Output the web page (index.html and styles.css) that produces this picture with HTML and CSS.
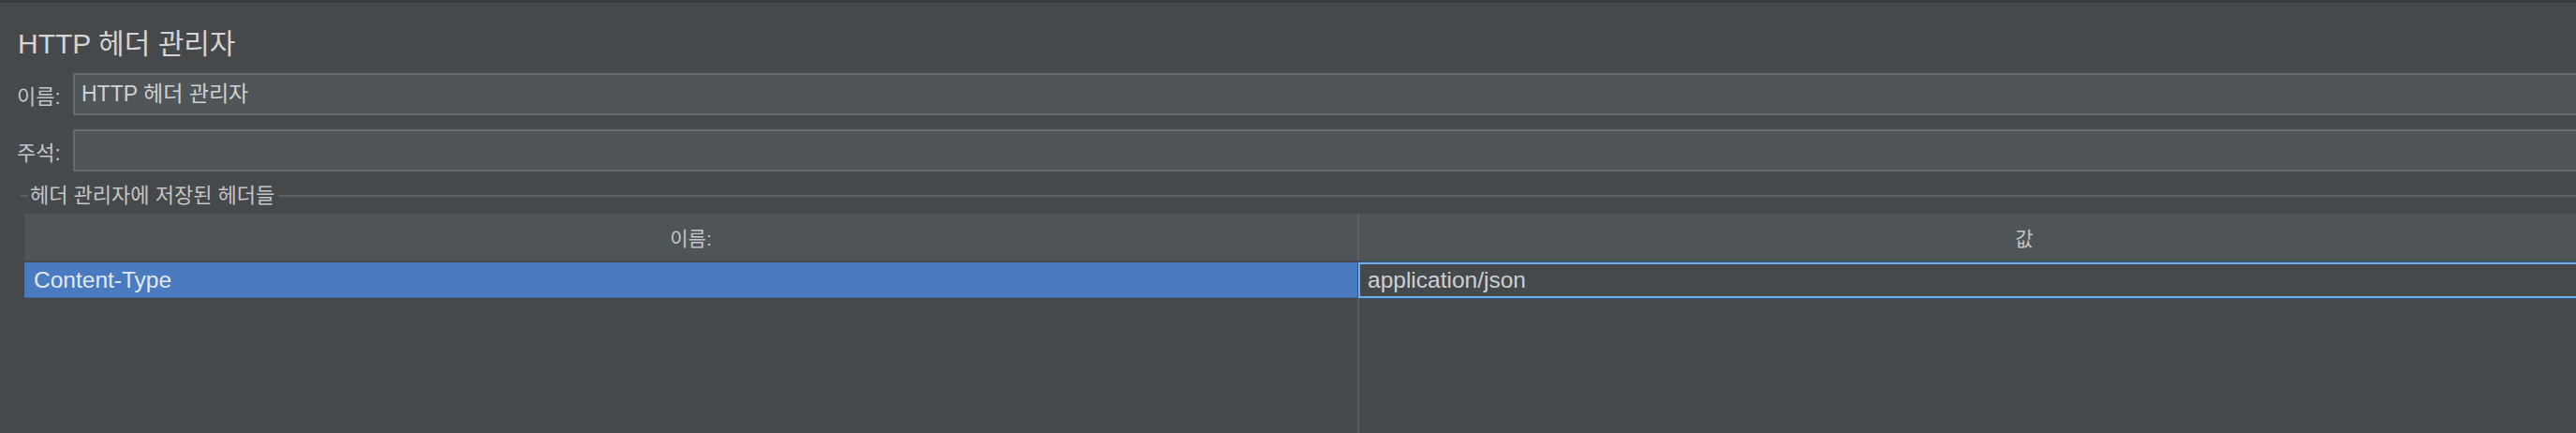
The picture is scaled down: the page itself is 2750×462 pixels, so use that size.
FILE: index.html
```html
<!DOCTYPE html>
<html lang="ko">
<head>
<meta charset="utf-8">
<title>HTTP 헤더 관리자</title>
<link rel="stylesheet" href="styles.css">
</head>
<body>
<div class="topbar"></div>
<main class="panel">
  <h1 class="title">HTTP 헤더 관리자</h1>
  <div class="field-row">
    <label class="label">이름:</label>
    <div class="input">HTTP 헤더 관리자</div>
  </div>
  <div class="field-row comment">
    <label class="label">주석:</label>
    <div class="input"></div>
  </div>
  <section class="group">
    <div class="group-title"><span>헤더 관리자에 저장된 헤더들</span></div>
    <div class="table">
      <div class="thead">
        <div class="th">이름:</div>
        <div class="th">값</div>
      </div>
      <div class="tr">
        <div class="td selected">Content-Type</div>
        <div class="td editing">application/json</div>
      </div>
      <div class="tfill">
        <div class="fill-col"></div>
        <div class="fill-col"></div>
      </div>
    </div>
  </section>
</main>
</body>
</html>
```
FILE: styles.css
```css
html, body {
  margin: 0;
  padding: 0;
}
body {
  width: 2750px;
  height: 462px;
  overflow: hidden;
  background: #46494b;
  color: #c9cbcc;
  font-family: "Liberation Sans", "Noto Sans CJK KR", sans-serif;
  font-size: 24px;
  display: flex;
  flex-direction: column;
}
.topbar {
  height: 3px;
  flex: none;
  background: #393c3e;
}
.panel {
  flex: 1;
  min-height: 0;
  overflow: hidden;
  display: flex;
  flex-direction: column;
}
.title {
  margin: 0;
  padding: 24px 0 0 19px;
  height: 51px;
  flex: none;
  box-sizing: border-box;
  font-size: 30px;
  font-weight: normal;
  line-height: 40px;
  color: #d2d4d5;
}
.field-row {
  display: flex;
  flex: none;
  align-items: center;
  margin: 24px -20px 0 0;
  height: 45px;
}
.field-row.comment {
  margin-top: 15px;
}
.label {
  width: 78px;
  padding-left: 18px;
  box-sizing: border-box;
  font-size: 22px;
  color: #c3c5c6;
}
.input {
  flex: 1;
  height: 45px;
  box-sizing: border-box;
  border: 2px solid #666b6d;
  background: #505657;
  padding: 0 0 0 7px;
  line-height: 41px;
  font-size: 23px;
  color: #cfd1d2;
}
.group {
  margin-top: 16px;
  flex: 1;
  min-height: 0;
  display: flex;
  flex-direction: column;
}
.group-title {
  display: flex;
  flex: none;
  align-items: center;
  height: 20px;
  padding-left: 22px;
  font-size: 22px;
  color: #c3c5c6;
}
.group-title::before {
  content: "";
  width: 8px;
  height: 2px;
  background: #5c6062;
}
.group-title span {
  padding: 0 4px 0 2px;
  line-height: 20px;
}
.group-title::after {
  content: "";
  flex: 1;
  height: 2px;
  background: #5c6062;
}
.table {
  margin: 9px 0 0 26px;
  width: 2845px;
  flex: 1;
  min-height: 0;
  display: flex;
  flex-direction: column;
}
.thead {
  display: grid;
  flex: none;
  grid-template-columns: 1423px 1422px;
  height: 50px;
  background: #4f5456;
}
.th {
  display: flex;
  align-items: center;
  justify-content: center;
  font-size: 21px;
  color: #c3c5c6;
}
.th + .th {
  border-left: 2px solid #5d6163;
}
.tr {
  display: grid;
  flex: none;
  grid-template-columns: 1423px 1422px;
  height: 38px;
  margin-top: 2px;
}
.td {
  display: flex;
  align-items: center;
  box-sizing: border-box;
  font-size: 24.5px;
}
.td.selected {
  background: #4a7bc0;
  color: #e4e8ef;
  padding-left: 10px;
  border-bottom: 1px solid #3d64a0;
}
.td.editing {
  background: #45494b;
  border: 2px solid #74aee0;
  box-shadow: 0 0 0 1px #2d5a86;
  padding-left: 8px;
  color: #cdd0d2;
  margin-left: 1px;
}
.tfill {
  display: grid;
  flex: 1;
  grid-template-columns: 1423px 1422px;
}
.fill-col + .fill-col {
  border-left: 2px solid #555a5c;
}
```
